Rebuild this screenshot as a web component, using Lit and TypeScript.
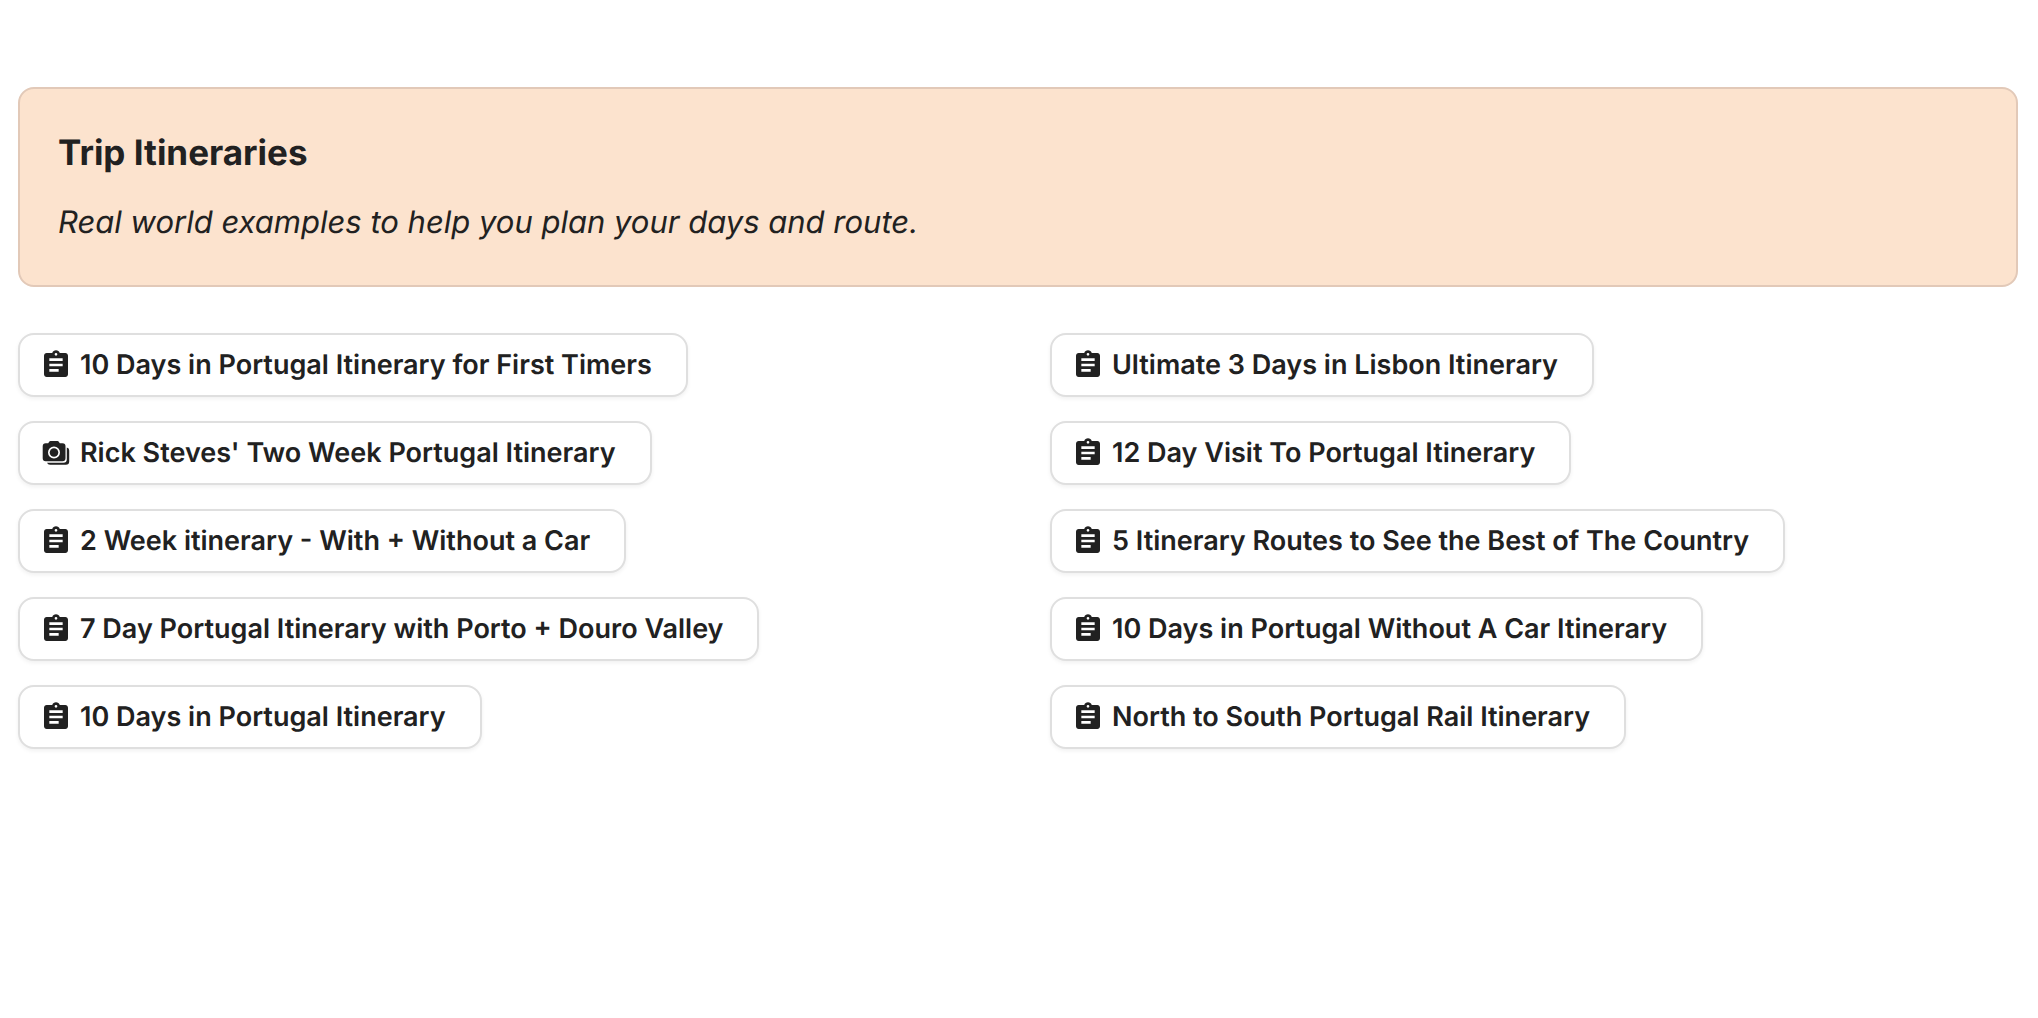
import { LitElement, html, css, svg } from "lit";
import { customElement } from "lit/decorators.js";

type IconName = "clipboard" | "camera";

interface Itinerary {
  label: string;
  icon: IconName;
}

const icons = {
  clipboard: svg`<svg class="icon" viewBox="0 0 24 24" aria-hidden="true">
    <path fill="currentColor" d="M19 3h-4.180C14.400 1.840 13.300 1 12 1c-1.300 0-2.400.84-2.820 2H5c-1.100 0-2 .9-2 2v14c0 1.100.9 2 2 2h14c1.100 0 2-.9 2-2V5c0-1.100-.9-2-2-2zm-7 0c.55 0 1 .45 1 1s-.45 1-1 1-1-.45-1-1 .45-1 1-1zm2 14H7v-2h7v2zm3-4H7v-2h10v2zm0-4H7V7h10v2z"/>
  </svg>`,
  camera: svg`<svg class="icon" viewBox="0 0 32 32" aria-hidden="true">
    <path fill="currentColor" fill-rule="evenodd" d="M10.500 4h7a1.500 1.500 0 0 1 1.300.8L19.800 6.300h2.700A3 3 0 0 1 25.500 9.300V21.200A3 3 0 0 1 22.500 24.200H5.700A3 3 0 0 1 2.700 21.200V9.300A3 3 0 0 1 5.700 6.300H8.200L9.200 4.800A1.500 1.500 0 0 1 10.500 4ZM14 9.500a6 6 0 1 0 0 12a6 6 0 0 0 0-12Z"/>
    <circle fill="currentColor" cx="14" cy="15.500" r="4.300"/>
    <path fill="currentColor" d="M26.800 10.600A2.800 2.800 0 0 1 29.200 13.500V24.500A3.300 3.300 0 0 1 25.900 27.800H10A3.400 3.400 0 0 1 7 25.700H23.300A3.500 3.500 0 0 0 26.800 22.200Z"/>
  </svg>`,
};

const columns: Itinerary[][] = [
  [
    { label: "10 Days in Portugal Itinerary for First Timers", icon: "clipboard" },
    { label: "Rick Steves' Two Week Portugal Itinerary", icon: "camera" },
    { label: "2 Week itinerary - With + Without a Car", icon: "clipboard" },
    { label: "7 Day Portugal Itinerary with Porto + Douro Valley", icon: "clipboard" },
    { label: "10 Days in Portugal Itinerary", icon: "clipboard" },
  ],
  [
    { label: "Ultimate 3 Days in Lisbon Itinerary", icon: "clipboard" },
    { label: "12 Day Visit To Portugal Itinerary", icon: "clipboard" },
    { label: "5 Itinerary Routes to See the Best of The Country", icon: "clipboard" },
    { label: "10 Days in Portugal Without A Car Itinerary", icon: "clipboard" },
    { label: "North to South Portugal Rail Itinerary", icon: "clipboard" },
  ],
];

@customElement("app-root")
export class AppRoot extends LitElement {
  static styles = css`
    :host {
      display: block;
      box-sizing: border-box;
      min-height: 100vh;
      padding: 87px 20px 48px 18px;
      background: #fff;
      color: #212121;
      font-family: Inter, "Liberation Sans", sans-serif;
      text-rendering: geometricPrecision;
    }
    .banner {
      box-sizing: border-box;
      padding: 40px 38px 38px;
      border: 2px solid #e2c9b8;
      border-radius: 16px;
      background: #fce3ce;
    }
    .title {
      margin: 0 0 22px;
      font-size: 35px;
      line-height: 48px;
      font-weight: 700;
    }
    .subtitle {
      margin: 0;
      font-size: 31px;
      line-height: 48px;
      font-style: italic;
    }
    .columns {
      display: grid;
      grid-template-columns: 1fr 1fr;
      gap: 64px;
      margin-top: 46px;
    }
    .list {
      display: flex;
      flex-direction: column;
      align-items: flex-start;
      gap: 24px;
      margin: 0;
      padding: 0;
      list-style: none;
    }
    .item {
      display: flex;
    }
    .pill {
      display: inline-flex;
      align-items: center;
      gap: 8px;
      padding: 12px 34px 12px 20px;
      border: 2px solid #dfdfdf;
      border-radius: 16px;
      background: #fff;
      box-shadow: 0 2px 4px rgba(0, 0, 0, 0.06);
      color: inherit;
      font-family: inherit;
      font-size: 27px;
      line-height: 36px;
      font-weight: 600;
      text-align: left;
      text-rendering: inherit;
      cursor: pointer;
    }
    .icon {
      flex: none;
      width: 32px;
      height: 32px;
    }
  `;

  render() {
    return html`
      <main>
        <header class="banner">
          <h1 class="title">Trip Itineraries</h1>
          <p class="subtitle">Real world examples to help you plan your days and route.</p>
        </header>
        <div class="columns">
          ${columns.map(
            (items) => html`<ul class="list">
              ${items.map(
                (item) => html`<li class="item">
                  <button class="pill" type="button">${icons[item.icon]}<span>${item.label}</span></button>
                </li>`
              )}
            </ul>`
          )}
        </div>
      </main>
    `;
  }
}
